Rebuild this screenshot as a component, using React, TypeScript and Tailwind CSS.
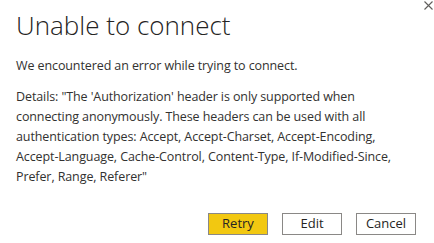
export default function App() {
  return (
    <div className="w-[434px] h-[243px] bg-white relative text-[#323130] font-['Segoe_UI','Open_Sans',sans-serif]">
      <button className="absolute right-[1px] top-0 w-[10px] h-[10px] flex items-center justify-center text-[#605e5c]">
        <svg width="9" height="9" viewBox="0 0 9 9" fill="none" stroke="currentColor" strokeWidth="1.1">
          <path d="M0.5 0.5L8.5 8.5M8.5 0.5L0.5 8.5" />
        </svg>
      </button>
      <div className="pl-4 pr-4 pt-[8px]">
        <h1 className="text-[26px] font-light leading-[34px] text-[#252423]">Unable to connect</h1>
        <div className="mt-[14px] text-[12.5px] tracking-[-0.1px] leading-[20px]">
          <p>We encountered an error while trying to connect.</p>
          <p className="mt-[11px]">
            Details: "The 'Authorization' header is only supported when
            <br />
            connecting anonymously. These headers can be used with all
            <br />
            authentication types: Accept, Accept-Charset, Accept-Encoding,
            <br />
            Accept-Language, Cache-Control, Content-Type, If-Modified-Since,
            <br />
            Prefer, Range, Referer"
          </p>
        </div>
        <div className="flex justify-end gap-[14px] mt-[26px] pr-[2px]">
          <button className="w-[60px] h-[22px] bg-[#f2c811] border border-[#8a8886] text-[13px] text-[#252423]">Retry</button>
          <button className="w-[60px] h-[22px] bg-white border border-[#8a8886] text-[13px] text-[#252423]">Edit</button>
          <button className="w-[60px] h-[22px] bg-white border border-[#8a8886] text-[13px] text-[#252423]">Cancel</button>
        </div>
      </div>
    </div>
  );
}
